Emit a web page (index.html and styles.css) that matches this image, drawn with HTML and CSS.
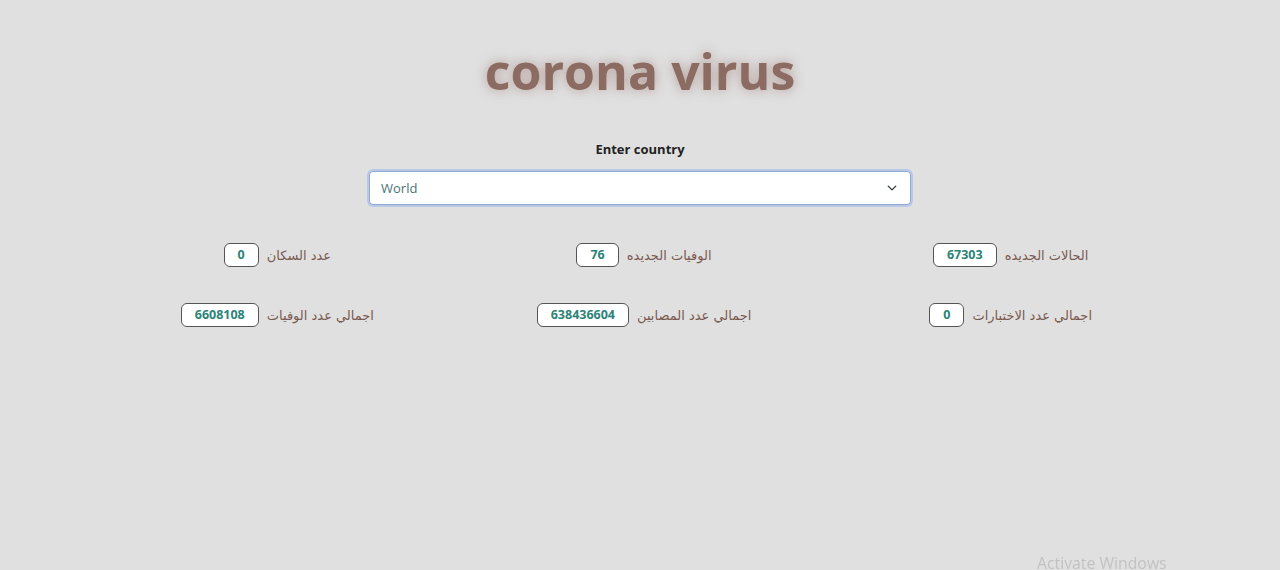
FILE: index.html
```html
<!DOCTYPE html>
<html lang="ar">
<head>
<meta charset="utf-8">
<title>corona virus</title>
<link rel="stylesheet" href="styles.css">
</head>
<body>
<main class="page">
  <h1 class="title">corona virus</h1>
  <section class="search">
    <label class="search-label" for="country">Enter country</label>
    <div class="select-wrap">
      <select id="country" class="select">
        <option>World</option>
      </select>
      <svg class="chevron" width="10" height="10" viewBox="0 0 16 16"><path d="M2 5l6 6 6-6" fill="none" stroke="#343a40" stroke-width="2.2" stroke-linecap="round" stroke-linejoin="round"/></svg>
    </div>
  </section>
  <section class="stats" dir="rtl">
    <div class="stat"><span class="stat-label">الحالات الجديده</span><span class="stat-value">67303</span></div>
    <div class="stat"><span class="stat-label">الوفيات الجديده</span><span class="stat-value">76</span></div>
    <div class="stat"><span class="stat-label">عدد السكان</span><span class="stat-value">0</span></div>
    <div class="stat"><span class="stat-label">اجمالي عدد الاختبارات</span><span class="stat-value">0</span></div>
    <div class="stat"><span class="stat-label">اجمالي عدد المصابين</span><span class="stat-value">638436604</span></div>
    <div class="stat"><span class="stat-label">اجمالي عدد الوفيات</span><span class="stat-value">6608108</span></div>
  </section>
</main>
<div class="activate">Activate Windows</div>
</body>
</html>
```
FILE: styles.css
```css
html, body {
  margin: 0;
  padding: 0;
  background: #e0e0e0;
  height: 100%;
  overflow: hidden;
}
body {
  font-family: "Open Sans", "DejaVu Sans", sans-serif;
}
.page {
  display: flex;
  flex-direction: column;
  align-items: center;
  padding-top: 37px;
}
.title {
  margin: 0;
  font-family: "Open Sans", sans-serif;
  font-weight: 700;
  font-size: 50px;
  line-height: 68px;
  color: #8c6c62;
  text-shadow: 0 0 12px rgba(140, 100, 90, 0.55);
  letter-spacing: 0;
}
.search {
  margin-top: 35px;
  display: flex;
  flex-direction: column;
  align-items: center;
  gap: 13px;
}
.search-label {
  font-weight: 700;
  font-size: 13px;
  color: #222;
  line-height: 18px;
}
.select-wrap {
  position: relative;
  width: 542px;
}
.select {
  appearance: none;
  -webkit-appearance: none;
  width: 100%;
  height: 34px;
  box-sizing: border-box;
  border: 1px solid #8eaad6;
  border-radius: 4px;
  box-shadow: 0 0 0 2px #b9c9e3;
  background: #fff;
  padding: 0 11px;
  font-family: "Open Sans", sans-serif;
  font-size: 13px;
  color: #4a7474;
  outline: none;
}
.chevron {
  position: absolute;
  right: 14px;
  top: 12px;
  pointer-events: none;
}
.stats {
  margin-top: 38px;
  width: 1100px;
  margin-left: 8px;
  display: grid;
  grid-template-columns: repeat(3, 1fr);
  row-gap: 36px;
}
.stat {
  display: flex;
  justify-content: center;
  align-items: center;
  gap: 8px;
}
.stat-label {
  font-family: "DejaVu Sans", sans-serif;
  font-size: 13px;
  color: #7a5a50;
}
.stat-value {
  display: inline-block;
  direction: ltr;
  min-width: 34px;
  box-sizing: border-box;
  height: 24px;
  line-height: 22px;
  padding: 0 13px;
  border: 1px solid #555;
  border-radius: 6px;
  background: #fff;
  font-family: "Open Sans", sans-serif;
  font-weight: 700;
  font-size: 12.5px;
  color: #2c8378;
  text-align: center;
}
.activate {
  position: fixed;
  left: 1037px;
  top: 552px;
  font-family: "Open Sans", sans-serif;
  font-size: 15.8px;
  color: #c2c2c2;
}
```
